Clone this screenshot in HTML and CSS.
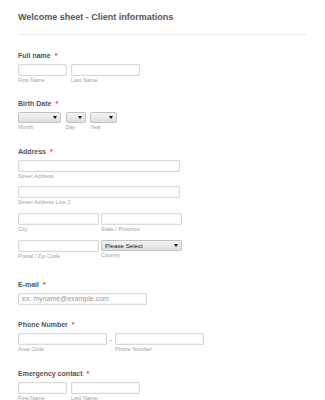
FILE: index.html
```html
<!DOCTYPE html>
<html>
<head>
<meta charset="utf-8">
<link rel="stylesheet" href="styles.css">
</head>
<body>
<div class="form">
  <h1 class="title">Welcome sheet - Client informations</h1>
  <div class="divider"></div>

  <div class="section section-first">
    <div class="label">Full name <span class="req">*</span></div>
    <div class="row">
      <div class="field"><div class="input w49"></div><div class="sub">First Name</div></div>
      <div class="field"><div class="input w69"></div><div class="sub">Last Name</div></div>
    </div>
  </div>

  <div class="section">
    <div class="label">Birth Date <span class="req">*</span></div>
    <div class="row row-date">
      <div class="field"><div class="select w43"><span class="arrow"></span></div><div class="sub">Month</div></div>
      <div class="field"><div class="select w20"><span class="arrow"></span></div><div class="sub">Day</div></div>
      <div class="field"><div class="select w27"><span class="arrow"></span></div><div class="sub">Year</div></div>
    </div>
  </div>

  <div class="section section-address">
    <div class="label">Address <span class="req">*</span></div>
    <div class="field addr-line"><div class="input w162"></div><div class="sub">Street Address</div></div>
    <div class="field addr-line addr-gap"><div class="input w162"></div><div class="sub">Street Address Line 2</div></div>
    <div class="row row-addr addr-line addr-gap">
      <div class="field"><div class="input w81"></div><div class="sub">City</div></div>
      <div class="field"><div class="input w81"></div><div class="sub">State / Province</div></div>
    </div>
    <div class="row row-addr">
      <div class="field"><div class="input w81"></div><div class="sub">Postal / Zip Code</div></div>
      <div class="field"><div class="select select-country w81"><span class="select-text">Please Select</span><span class="arrow"></span></div><div class="sub">Country</div></div>
    </div>
  </div>

  <div class="section section-email">
    <div class="label">E-mail <span class="req">*</span></div>
    <div class="input w129 placeholder">ex: myname@example.com</div>
  </div>

  <div class="section">
    <div class="label">Phone Number <span class="req">*</span></div>
    <div class="row row-phone">
      <div class="field"><div class="input w89"></div><div class="sub">Area Code</div></div>
      <div class="dash">-</div>
      <div class="field"><div class="input w89"></div><div class="sub">Phone Number</div></div>
    </div>
  </div>

  <div class="section">
    <div class="label">Emergency contact <span class="req">*</span></div>
    <div class="row">
      <div class="field"><div class="input w49"></div><div class="sub">First Name</div></div>
      <div class="field"><div class="input w69"></div><div class="sub">Last Name</div></div>
    </div>
  </div>
</div>
</body>
</html>
```
FILE: styles.css
```css
html, body {
  margin: 0;
  padding: 0;
  background: #fff;
}
body {
  font-family: "Liberation Sans", Arial, sans-serif;
  color: #555;
}
.form {
  padding: 11px 18px 0 18px;
}
.title {
  margin: 0;
  font-size: 9px;
  line-height: 12px;
  font-weight: bold;
  color: #555;
}
.divider {
  margin-top: 11px;
  width: 289px;
  height: 1px;
  background: #ececec;
}
.section {
  padding-top: 14px;
  padding-bottom: 2px;
}
.section-first {
  padding-top: 16px;
  padding-bottom: 1px;
}
.label {
  font-size: 7px;
  line-height: 10px;
  font-weight: bold;
  color: #555;
  margin-bottom: 3px;
}
.req {
  color: #f23a3c;
  margin-left: 2px;
}
.row {
  display: flex;
  gap: 4px;
}
.row-date {
  gap: 4.5px;
}
.row-addr {
  gap: 2px;
}
.row-phone {
  gap: 0;
}
.field {
  display: flex;
  flex-direction: column;
}
.input {
  box-sizing: border-box;
  height: 12px;
  border: 1px solid #dadada;
  border-radius: 1px;
  background: #fff;
  box-shadow: inset 0 0 0 1px #f6f6f6;
}
.select {
  box-sizing: border-box;
  height: 11px;
  border: 1px solid #c3c3c3;
  border-radius: 2px;
  background: linear-gradient(#f4f4f4, #dedede);
  position: relative;
}
.arrow {
  position: absolute;
  right: 3px;
  top: 3px;
  width: 0;
  height: 0;
  border-left: 2px solid transparent;
  border-right: 2px solid transparent;
  border-top: 3px solid #111;
}
.select-text {
  display: block;
  font-size: 6.2px;
  line-height: 9px;
  color: #1a1a1a;
  padding-left: 3px;
}
.sub {
  font-size: 5.5px;
  line-height: 8px;
  color: #a3a3a3;
}
.addr-line {
  margin-bottom: 6px;
}
.addr-gap {
  margin-bottom: 7px;
}
.dash {
  width: 8px;
  text-align: center;
  font-size: 7px;
  line-height: 14px;
  color: #777;
}
.placeholder {
  font-size: 7px;
  line-height: 10px;
  padding-left: 3px;
  color: #9a9a9a;
}
.section-address {
  padding-bottom: 6px;
}
.section-email {
  padding-bottom: 1px;
}
.w20 { width: 20px; }
.w27 { width: 27px; }
.w43 { width: 43px; }
.w49 { width: 49px; }
.w69 { width: 69px; }
.w81 { width: 81px; }
.w89 { width: 89px; }
.w129 { width: 129px; }
.w162 { width: 162px; }
```
